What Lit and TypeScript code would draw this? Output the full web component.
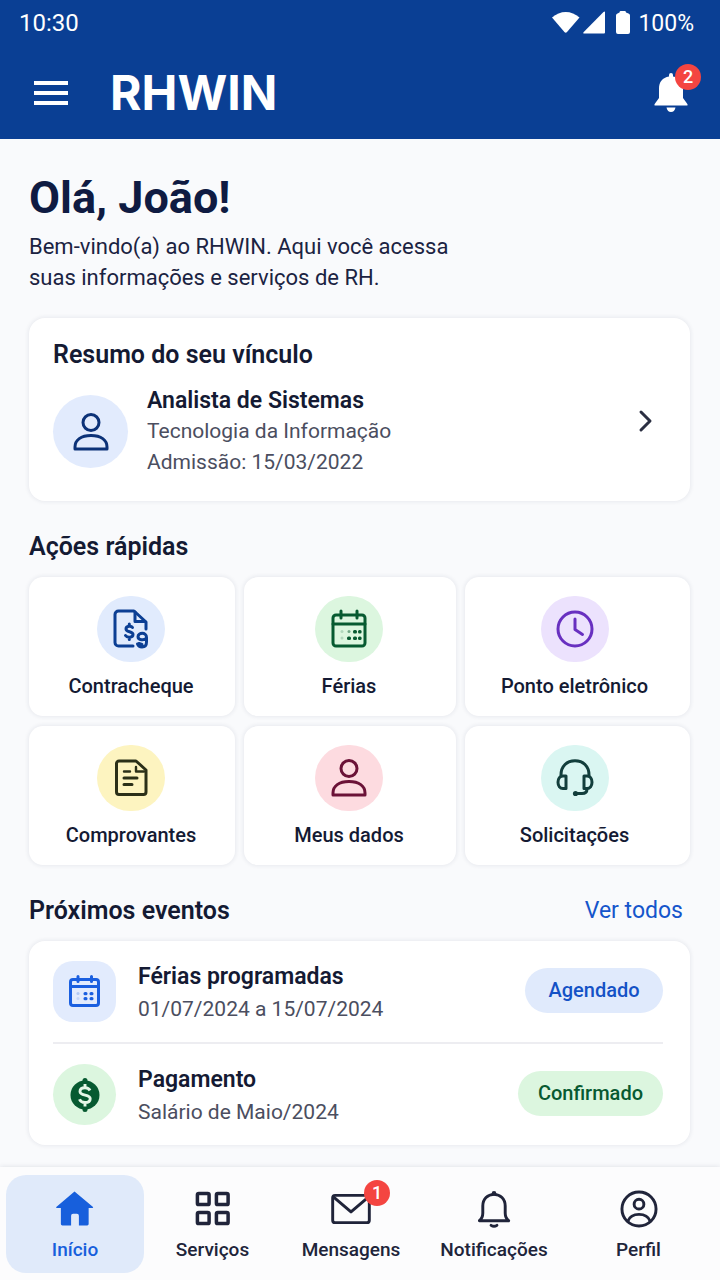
import { LitElement, html, svg, css } from "lit";
import { customElement } from "lit/decorators.js";

const calendarIcon = svg`
  <rect x="3" y="5" width="32" height="31" rx="3" />
  <path d="M3 14h32M11 1v7M27 1v7" />
  <g stroke="none" fill="currentColor">
    <circle cx="19" cy="21.500" r="1.500" opacity=".5" />
    <rect x="23" y="20" width="4" height="3.400" rx="1.500" />
    <rect x="28" y="20" width="3.600" height="3.400" rx="1.500" />
    <circle cx="12" cy="21.500" r="1.500" opacity=".2" />
    <circle cx="12" cy="28" r="1.500" opacity=".2" />
    <rect x="17" y="26.500" width="4" height="3.400" rx="1.500" />
    <rect x="23" y="26.500" width="4" height="3.400" rx="1.500" />
    <rect x="28" y="26.500" width="3.600" height="3.400" rx="1.500" />
  </g>`;

const smallCalendarIcon = svg`
  <rect x="1.500" y="4.500" width="28" height="26" rx="2.500" />
  <path d="M1.500 11.500h28M9 1.500v5M22.500 1.500v5" />
  <g stroke="none" fill="currentColor">
    <circle cx="9" cy="18.500" r="1.500" opacity=".25" />
    <circle cx="9" cy="23.500" r="1.500" opacity=".15" />
    <rect x="14.500" y="17" width="4" height="3.200" rx="1.500" />
    <rect x="20.500" y="17" width="4" height="3.200" rx="1.500" />
    <rect x="14.500" y="22" width="4" height="3.200" rx="1.500" />
    <rect x="20.500" y="22" width="4" height="3.200" rx="1.500" />
  </g>`;

const personIcon = svg`
  <circle cx="19" cy="9.500" r="8" />
  <path d="M3 36v-2c0-7 6-11.500 16-11.500S35 27 35 34v2z" />`;

const icons = {
  payslip: svg`
    <path d="M21 36H6.500A3.500 3.500 0 0 1 3 32.500V4.500A3.500 3.500 0 0 1 6.500 1H22l12 11v7" />
    <path d="M23 2v9.500h10" />
    <path d="M20.500 17.500c-1-1.700-6.500-2-6.500 1.500 0 3.600 7 2 7 5.500 0 3.400-6 3.300-7.500 1M17.300 14v2M17.300 27.500v2" />
    <path d="M34 28.500c-1.500 1.800-8 2-8-1.800 0-4.200 8.500-5 8.500.8v4.500c0 3.500-2 5-4.500 5-2.200 0-3.800-1.200-4.500-3M27 33.500l3 1" />`,
  calendar: calendarIcon,
  clock: svg`
    <circle cx="19" cy="19" r="17" />
    <path d="M19 9v10.500l7.500 5" />`,
  receipt: svg`
    <path d="M7 2h17l10 9v22a2.500 2.500 0 0 1-2.500 2.500H7A2.500 2.500 0 0 1 4.500 33V4.500A2.500 2.500 0 0 1 7 2z" />
    <path d="M12 12.500h6M24 8v4.500h8" stroke-width="2.400" />
    <path d="M12 19h13M12 25.500h8" />`,
  person: personIcon,
  headset: svg`
    <path d="M5 17v-1C5 7 11 1.700 19 1.700S33 7 33 16v1" />
    <path d="M10 17v12.500H7c-3 0-5-2.500-5-6.250S4 17 7 17zM28 17v12.500h3c3 0 5-2.500 5-6.250S34 17 31 17z" />
    <path d="M31 30c0 3-2 4.500-5 4.500h-6" />
    <circle cx="19.500" cy="34.500" r="2.600" fill="currentColor" stroke="none" />`,
};

const actions = [
  { label: "Contracheque", icon: icons.payslip, tone: "blue" },
  { label: "Férias", icon: icons.calendar, tone: "green" },
  { label: "Ponto eletrônico", icon: icons.clock, tone: "purple" },
  { label: "Comprovantes", icon: icons.receipt, tone: "yellow" },
  { label: "Meus dados", icon: icons.person, tone: "pink" },
  { label: "Solicitações", icon: icons.headset, tone: "teal" },
];

const navItems = [
  {
    label: "Início",
    active: true,
    icon: svg`<path d="M19 1.500 38 17.500q.5 1-.7 1H33.500V35q0 1.500-1.500 1.500h-8.500V26.500q0-2-2-2h-4q-2 0-2 2v10H6.500Q5 36.500 5 35V18.500H1q-1.500 0-.7-1z" fill="currentColor" stroke="none" />`,
  },
  {
    label: "Serviços",
    icon: svg`<g stroke-width="3.600"><rect x="3.500" y="3.500" width="12" height="11.500" rx="1.500" /><rect x="23" y="3.500" width="12" height="11.500" rx="1.500" /><rect x="3.500" y="23" width="12" height="11.500" rx="1.500" /><rect x="23" y="23" width="12" height="11.500" rx="1.500" /></g>`,
  },
  {
    label: "Mensagens",
    badge: "1",
    icon: svg`<rect x="0.700" y="5.500" width="37.600" height="28" rx="2.500" /><path d="m2 7.500 17.500 15L37 7.500" />`,
  },
  {
    label: "Notificações",
    icon: svg`<path d="M4.500 31.500c3-2.500 3.500-4 3.500-8V16.500C8 9 13 4.500 19.500 4.500S31 9 31 16.500v7c0 4 .5 5.500 3.500 8z" /><path d="M16.500 36.300q3 2 6 0" /><circle cx="19.500" cy="3.500" r="2.400" fill="currentColor" stroke="none" />`,
  },
  {
    label: "Perfil",
    icon: svg`<circle cx="19.500" cy="19.500" r="17.500" /><circle cx="19.500" cy="14.500" r="5" /><path d="M8 32c2-5 6-7 11.500-7S29 27 31 32" />`,
  },
];

@customElement("app-root")
export class AppRoot extends LitElement {
  static styles = css`
    :host {
      display: flex;
      flex-direction: column;
      min-height: 100vh;
      background: #f9fafc;
      color: #141a33;
      font-family: Roboto, "Liberation Sans", sans-serif;
    }
    * { box-sizing: border-box; margin: 0; }
    a { color: inherit; text-decoration: none; }
    button { border: 0; padding: 0; background: none; color: inherit; font: inherit; cursor: pointer; }
    svg { display: block; overflow: visible; flex: none; }
    .line {
      fill: none;
      stroke: currentColor;
      stroke-width: 3;
      stroke-linecap: round;
      stroke-linejoin: round;
    }

    .top { background: #0a3f94; color: #fff; }
    .status {
      display: flex;
      justify-content: space-between;
      align-items: center;
      height: 46px;
      padding: 0 26px 0 19px;
      font-size: 23px;
    }
    .time { font-size: 24px; }
    .device { display: flex; align-items: center; gap: 6px; }
    .bar { display: flex; align-items: center; height: 93px; padding: 0 32px 0 34px; }
    .brand {
      margin-left: 42px;
      font-family: Inter, Roboto, sans-serif;
      font-size: 48px;
      line-height: 56px;
      font-weight: 700;
    }
    .bell { position: relative; margin-left: auto; }
    .badge {
      position: absolute;
      display: grid;
      place-items: center;
      width: 26px;
      height: 26px;
      border-radius: 50%;
      background: #f44541;
      color: #fff;
      font-size: 18px;
      line-height: 26px;
      font-weight: 500;
    }
    .bell .badge { top: -9px; right: -13px; }

    main { flex: 1; padding: 32px 30px 22px 29px; }
    h1 { font-size: 45px; line-height: 54px; font-weight: 700; color: #0f1b42; }
    .intro { max-width: 440px; margin-top: 6px; font-size: 22px; line-height: 31px; color: #1b2342; }
    h2 { font-size: 25px; line-height: 32px; font-weight: 600; color: #141a33; }
    .card {
      background: #fff;
      border-radius: 16px;
      box-shadow: 0 0 5px rgba(30, 40, 70, 0.11);
    }
    .summary { margin-top: 25px; padding: 21px 37px 23px 24px; }
    .job { display: flex; align-items: center; margin-top: 14px; }
    .avatar {
      display: grid;
      place-items: center;
      width: 75px;
      height: 73px;
      margin-right: 19px;
      border-radius: 50%;
      background: #e2ebfd;
      color: #0c3278;
    }
    h3 { font-size: 23px; line-height: 31px; font-weight: 600; color: #141a33; }
    .detail { font-size: 21px; line-height: 31px; color: #4b4e60; }
    .go { margin: 0 0 22px auto; color: #2b2f42; }

    .section { display: flex; justify-content: space-between; margin: 30px 7px 14px 0; }
    .all { font-size: 23px; line-height: 32px; color: #1555cb; }

    .actions { display: grid; grid-template-columns: 206fr 212fr 225fr; gap: 10px 9px; }
    .tile {
      display: flex;
      flex-direction: column;
      align-items: center;
      gap: 12px;
      padding: 19px 10px 18px 8px;
      border-radius: 14px;
      font-size: 20px;
      line-height: 24px;
      font-weight: 500;
    }
    .tile:nth-child(3n) { padding-right: 14px; }
    .disc {
      display: grid;
      place-items: center;
      width: 68px;
      height: 66px;
      border-radius: 33px;
    }
    .blue { background: #e1ebfd; color: #0c3f94; }
    .green { background: #dcf6df; color: #075a31; }
    .purple { background: #ece2fd; color: #6830c0; }
    .yellow { background: #fdf4c0; color: #2b3018; }
    .pink { background: #fddbe0; color: #6b1237; }
    .teal { background: #daf6f2; color: #123e3c; }

    .events { padding: 0 27px 0 24px; list-style: none; }
    .event { display: flex; align-items: flex-start; padding: 20px 0 17px; }
    .event h3, .event .detail { line-height: 32px; }
    .event + .event { border-top: 2px solid #ededf1; }
    .mark {
      display: grid;
      place-items: center;
      width: 63px;
      height: 61px;
      margin-right: 22px;
      border-radius: 20px;
    }
    .mark.sky { background: #e2ebfd; color: #1a5fe0; }
    .mark.round { border-radius: 50%; }
    .pill {
      min-width: 138px;
      margin: 7px 0 0 auto;
      padding: 0 20px;
      border-radius: 23px;
      font-size: 20px;
      line-height: 45px;
      font-weight: 500;
      text-align: center;
    }
    .pill.sky { background: #e0eafc; color: #1452c6; }

    nav {
      display: grid;
      grid-template-columns: 138fr 137fr 140fr 146fr 143fr;
      padding: 8px 10px 7px 6px;
      background: #fcfcfd;
      box-shadow: 0 0 5px rgba(30, 40, 70, 0.13);
    }
    .tab {
      display: flex;
      flex-direction: column;
      align-items: center;
      gap: 10px;
      padding: 15px 0 11px;
      border-radius: 20px;
      font-size: 19px;
      line-height: 24px;
      font-weight: 500;
      color: #20243a;
    }
    .tab.active { background: #e0eafa; color: #175fdc; }
    .glyph { position: relative; }
    .glyph .badge { top: -10px; right: -20px; }
  `;

  render() {
    return html`
      <header class="top">
        <div class="status">
          <span class="time">10:30</span>
          <div class="device">
            <svg width="54" height="24" viewBox="0 0 54 24" fill="#fff" aria-hidden="true">
              <path d="M0 6.500C8 -1 19.500-1 27.500 6.500L15 21q-1.300 1.300-2.600 0z" />
              <path d="M53 1v20.500q0 1-1 1H32q-1.500 0-.5-1.200L51.500 1q1.500-1.200 1.500 0z" />
            </svg>
            <svg width="20" height="24" viewBox="0 0 20 24" fill="#fff" aria-hidden="true">
              <path d="M8.500 0h4.500q1 0 1 1.500l2.500 1q1.500.5 1.500 2V21q0 2-2 2H6q-2 0-2-2V4.500q0-1.500 1.500-2l2-1q0-1.500 1-1.500z" />
            </svg>
            <span>100%</span>
          </div>
        </div>
        <div class="bar">
          <button aria-label="Menu">
            <svg width="34" height="24" viewBox="0 0 34 24" fill="#fff">
              <path d="M0 0h34v4H0zM0 10h34v4H0zM0 20h34v4H0z" />
            </svg>
          </button>
          <span class="brand">RHWIN</span>
          <button class="bell" aria-label="Notificações">
            <svg width="34" height="39" viewBox="0 0 34 39" fill="#fff">
              <path d="M15 2q0-2 2-2t2 2v1.500c6.500 1 10 5.500 10 12V25l4 5.500q1.500 2-.5 2h-31q-2 0-.5-2L5 25v-9.500c0-6.500 3.500-11 10-12zM12.500 34.500h9q-1 4.500-4.500 4.500t-4.500-4.500z" />
            </svg>
            <span class="badge">2</span>
          </button>
        </div>
      </header>

      <main>
        <h1>Olá, João!</h1>
        <p class="intro">Bem-vindo(a) ao RHWIN. Aqui você acessa suas informações e serviços de RH.</p>

        <section class="card summary">
          <h2>Resumo do seu vínculo</h2>
          <a class="job" href="#vinculo">
            <span class="avatar">
              <svg class="line" width="38" height="38" viewBox="0 0 38 38" aria-hidden="true">${personIcon}</svg>
            </span>
            <div>
              <h3>Analista de Sistemas</h3>
              <p class="detail">Tecnologia da Informação</p>
              <p class="detail">Admissão: 15/03/2022</p>
            </div>
            <svg class="line go" width="16" height="22" viewBox="0 0 16 22" aria-hidden="true">
              <path d="m4 2 9 9-9 9" />
            </svg>
          </a>
        </section>

        <div class="section"><h2>Ações rápidas</h2></div>
        <div class="actions">
          ${actions.map(
            (a) => html`
              <button class="card tile">
                <span class="disc ${a.tone}">
                  <svg class="line" width="38" height="38" viewBox="0 0 38 38" aria-hidden="true">${a.icon}</svg>
                </span>
                <span>${a.label}</span>
              </button>
            `
          )}
        </div>

        <div class="section">
          <h2>Próximos eventos</h2>
          <a class="all" href="#eventos">Ver todos</a>
        </div>
        <ul class="card events">
          <li class="event">
            <span class="mark sky">
              <svg class="line" width="31" height="33" viewBox="0 0 31 33" aria-hidden="true">${smallCalendarIcon}</svg>
            </span>
            <div>
              <h3>Férias programadas</h3>
              <p class="detail">01/07/2024 a 15/07/2024</p>
            </div>
            <span class="pill sky">Agendado</span>
          </li>
          <li class="event">
            <span class="mark round green">
              <svg width="30" height="34" viewBox="0 0 30 34" aria-hidden="true">
                <circle cx="15" cy="17" r="14.500" fill="currentColor" />
                <circle cx="15" cy="2.500" r="2.500" fill="currentColor" />
                <circle cx="15" cy="31.500" r="2.500" fill="currentColor" />
                <path d="M20 12.500C19 10.500 17.500 9.800 15 9.800c-3 0-5 1.300-5 3.700 0 5 10.200 2.300 10.200 7.200 0 2.300-2 3.800-5.200 3.800-2.700 0-4.700-1-5.500-3.200M15 6v4M15 24v4.500" fill="none" stroke="#e6f8e8" stroke-width="2.900" />
              </svg>
            </span>
            <div>
              <h3>Pagamento</h3>
              <p class="detail">Salário de Maio/2024</p>
            </div>
            <span class="pill green">Confirmado</span>
          </li>
        </ul>
      </main>

      <nav aria-label="Principal">
        ${navItems.map(
          (n) => html`
            <a class="tab ${n.active ? "active" : ""}" href="#">
              <span class="glyph">
                <svg class="line" width="38" height="38" viewBox="0 0 39 39" aria-hidden="true">${n.icon}</svg>
                ${n.badge ? html`<span class="badge">${n.badge}</span>` : null}
              </span>
              <span>${n.label}</span>
            </a>
          `
        )}
      </nav>
    `;
  }
}
